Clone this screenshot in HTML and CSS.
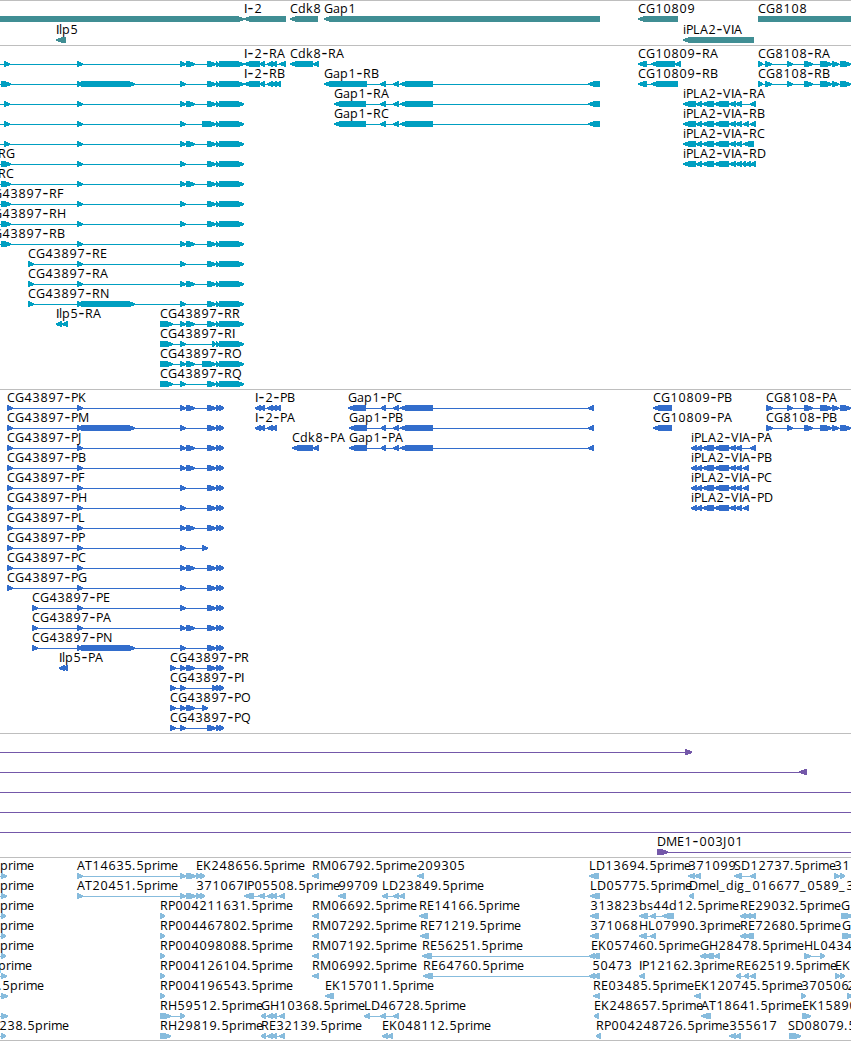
FILE: index.html
```html
<!DOCTYPE html>
<html lang="en">
<head>
<meta charset="utf-8">
<title>Genome browser</title>
<link rel="stylesheet" href="styles.css">
</head>
<body>
<main class="browser">
<section class="track genes"><svg class="canvas" id="genes"></svg></section>
<section class="track transcripts"><svg class="canvas" id="transcripts"></svg></section>
<section class="track cds"><svg class="canvas" id="cds"></svg></section>
<section class="track clones"><svg class="canvas" id="clones"></svg></section>
<section class="track ests"><svg class="canvas" id="ests"></svg></section>
</main>
<script src="tracks.js"></script>
</body>
</html>
```
FILE: styles.css
```css
body { margin: 0; background: #fff; }
.browser { display: flex; flex-direction: column; width: 851px; height: 1041px; overflow: hidden; }
.track { box-sizing: border-box; flex: none; border-top: 1px solid #bebebe; overflow: hidden; }
.canvas { display: block; width: 851px; height: 100%; overflow: hidden; }
.label { font-family: "Open Sans", sans-serif; font-size: 12.5px; fill: #000; }
.label .plain { font-family: "Liberation Sans", sans-serif; }
.label .dash { font-size: 18px; }
.shape { shape-rendering: crispEdges; fill: currentColor; }
.genes { height: 45px; color: #408e94; }
.transcripts { height: 344px; color: #009fc1; }
.cds { height: 344px; color: #326dcc; }
.clones { height: 124px; color: #7458a9; }
.ests { height: 184px; color: #87bcdd; border-bottom: 1px solid #bebebe; }
```
FILE: tracks.js
```js
const NS = "http://www.w3.org/2000/svg";

// Advance width of each label character, in pixels.
const ADVANCE = { A:8, B:7, C:8, D:9, E:7, F:6, G:9, H:9, I:3, J:4, K:8, L:7, M:11, N:9, O:9, P:7, Q:9, R:8, S:7, T:7, V:8,
  a:7, b:8, d:8, e:7, g:8, i:3, k:7, l:3, m:11, p:8, r:5, s:6, "-":7, ".":4, "_":7 };

function add(parent, name, attrs, text) {
  const el = document.createElementNS(NS, name);
  for (const k in attrs) el.setAttribute(k, attrs[k]);
  if (text) el.textContent = text;
  parent.appendChild(el);
  return el;
}

// Each character sits on its own advance; "I" is drawn without serifs and "-" wide.
function label(svg, x, y, text) {
  const line = add(svg, "text", { class: "label", y });
  let at = x;
  for (const run of text.match(/I|-|[^I-]+/g)) {
    const xs = [];
    for (const ch of run) {
      xs.push(at + (/[0-9]/.test(ch) ? 0.4 : ch === "-" ? 0.5 : 0));
      at += ADVANCE[ch] || 8;
    }
    const attrs = { x: xs.join(" "), y: run === "-" ? y + 1 : y };
    if (run === "I") attrs.class = "plain";
    if (run === "-") attrs.class = "dash";
    add(line, "tspan", attrs, run);
  }
}

// A block with a pointed end; dir is ">" or "<", "=" leaves it square.
function block(svg, a, b, top, dir) {
  const bottom = top + 6, h = Math.min(b - a - 1, 6);
  let pts;
  if (dir === ">") pts = [[a, top], [b - h, top], [b, top + 2.2], [b, top + 4], [b - h, bottom], [a, bottom]];
  else if (dir === "<") pts = [[b, top], [a + h, top], [a, top + 2.2], [a, top + 4], [a + h, bottom], [b, bottom]];
  else pts = [[a, top], [b, top], [b, bottom], [a, bottom]];
  add(svg, "polygon", { class: "shape", points: pts.map(p => p.join(",")).join(" ") });
}

// Feature: [row, label, label x, direction, "a-b a-b ...", line start, line end]
function draw(id, features, pitch = 20, top = 15) {
  const svg = document.getElementById(id);
  for (const [row, text, x, dir, spans, from, to] of features) {
    const y = top + row * pitch;
    const list = spans ? spans.split(" ").map(s => s.split("-").map(Number)) : [];
    const a = from ?? list[0][0], b = to ?? list[list.length - 1][1];
    add(svg, "rect", { class: "shape", x: a, y: y + 3, width: b - a, height: 1 });
    for (const [s, e] of list) block(svg, s, e, y, dir);
    if (text) label(svg, x, y - 3, text);
  }
}

draw("genes", [
  [0, "", 0, ">", "0-244"], [0, "I-2", 244, "<", "244-286"], [0, "Cdk8", 290, "<", "290-318"],
  [0, "Gap1", 324, "<", "324-600"], [0, "CG10809", 638, "<", "638-678"], [0, "CG8108", 758, "=", "758-851"],
  [1, "Ilp5", 56, "<", "56-66"], [1, "iPLA2-VIA", 683, "<", "683-754"]
], 21, 15);

const C = "180-186", D = "186-195", END = "207-216 216-219 219-244", LONG = "202-216 216-219 219-244", M = "77-82 81-135";
const P = "758-763 765-772 787-793 804-813 820-832 832-839 840-851";
draw("transcripts", [
  [0, "", 0, ">", `4-10 77-83 ${C} ${D} ${END}`, 0],
  [1, "", 0, ">", `1-11 ${M} ${C} ${END}`, 0],
  [2, "", 0, ">", `4-10 77-83 ${C} ${D} ${END}`, 0],
  [3, "", 0, ">", `4-10 77-83 ${C} ${LONG}`, 0],
  [4, "", 0, ">", `4-10 77-83 ${C} ${D} ${END}`, 0],
  [5, "CG43897-RG", -66, ">", `1-11 77-83 ${C} ${END}`, 0],
  [6, "CG43897-RC", -66, ">", `1-11 77-83 ${C} ${D} ${END}`, 0],
  [7, "CG43897-RF", -15, ">", `1-11 77-83 ${C} ${END}`, 0],
  [8, "CG43897-RH", -15, ">", `1-11 77-83 ${C} ${END}`, 0],
  [9, "CG43897-RB", -15, ">", `1-11 77-83 ${C} ${D} ${END}`, 0],
  [10, "CG43897-RE", 28, ">", `28-34 77-83 ${C} ${END}`],
  [11, "CG43897-RA", 28, ">", `28-34 77-83 ${C} ${D} ${END}`],
  [12, "CG43897-RN", 28, ">", `28-34 ${M} ${C} ${END}`],
  [13, "Ilp5-RA", 56, "<", "56-62 62-68"],
  [13, "CG43897-RR", 160, ">", `160-173 ${C} ${D} ${END}`],
  [14, "CG43897-RI", 160, ">", `160-173 ${C} 212-216 216-219 219-244`],
  [15, "CG43897-RO", 160, ">", `160-173 ${C} ${D} ${LONG}`],
  [16, "CG43897-RQ", 160, ">", `160-173 ${C} ${END}`],
  [0, "I-2-RA", 244, "<", "244-260 260-265 267-273 272-277 279-286"],
  [1, "I-2-RB", 244, "<", "244-260 260-265 267-273 272-277 276-281"],
  [0, "Cdk8-RA", 290, "<", "290-313 313-319"],
  [1, "Gap1-RB", 324, "<", "324-367 380-386 393-399 400-433 588-600"],
  [2, "Gap1-RA", 334, "<", "334-366 380-386 393-399 400-433 588-600"],
  [3, "Gap1-RC", 334, "<", "334-366 380-386 393-399 400-433 588-600"],
  [0, "CG10809-RA", 638, "<", "638-647 651-675 675-681"],
  [1, "CG10809-RB", 638, "<", "638-647 651-678"],
  [2, "iPLA2-VIA-RA", 683, "<", "683-696 696-702 702-714 714-729 729-736 735-742 750-756"],
  [3, "iPLA2-VIA-RB", 683, "<", "683-696 696-702 702-714 714-729 729-736 735-742 743-749 750-756"],
  [4, "iPLA2-VIA-RC", 683, "<", "683-696 696-702 702-714 714-729 729-736 735-742 743-754"],
  [5, "iPLA2-VIA-RD", 683, "<", "683-696 696-702 702-714 714-729 729-736 735-742 742-746 745-751 750-756"],
  [0, "CG8108-RA", 758, ">", P], [1, "CG8108-RB", 758, ">", P]
]);

const TAIL = "207-216 216-221 219-224";
const S = "766-773 787-793 804-813 820-832 832-839 840-851";
const V = "691-697 696-702 702-714 714-729 729-736 735-742";
const GAP = "381-386 393-399 400-433 588-594";
draw("cds", [
  ...[["K", 1], ["M", 2], ["J", 1], ["B", 1], ["F", 0], ["H", 0], ["L", 1], ["P", 3], ["C", 1], ["G", 0]].map(([n, kind], i) =>
    [i, "CG43897-P" + n, 7, ">", `7-13 ${kind === 2 ? M : "77-83"} ${C} ${kind === 1 ? D + " " : ""}${kind === 3 ? "202-208" : TAIL}`]),
  [10, "CG43897-PE", 32, ">", `32-38 77-83 ${C} ${TAIL}`],
  [11, "CG43897-PA", 32, ">", `32-38 77-83 ${C} ${D} ${TAIL}`],
  [12, "CG43897-PN", 32, ">", `32-38 ${M} ${C} ${TAIL}`],
  [13, "Ilp5-PA", 59, "<", "59-65 62-68"],
  [13, "CG43897-PR", 170, ">", `170-176 ${C} ${D} ${TAIL}`],
  [14, "CG43897-PI", 170, ">", `170-176 ${C} 212-217 216-221 219-224`],
  [15, "CG43897-PO", 170, ">", `170-176 ${C} ${D} 202-208`],
  [16, "CG43897-PQ", 170, ">", `170-176 ${C} ${TAIL}`],
  [0, "I-2-PB", 255, "<", "255-261 260-265 267-273 272-277 276-281"],
  [1, "I-2-PA", 255, "<", "255-261 260-265 267-273 272-277"],
  [2, "Cdk8-PA", 292, "<", "292-313 313-319"],
  [0, "Gap1-PC", 348, "<", "348-366 " + GAP],
  [1, "Gap1-PB", 349, "<", "349-367 " + GAP],
  [2, "Gap1-PA", 349, "<", "349-367 " + GAP],
  [0, "CG10809-PB", 653, "<", "653-672"], [1, "CG10809-PA", 653, "<", "653-672"],
  [2, "iPLA2-VIA-PA", 691, "<", V + " 750-756"],
  [3, "iPLA2-VIA-PB", 691, "<", V + " 743-749"],
  [4, "iPLA2-VIA-PC", 691, "<", V + " 743-749"],
  [5, "iPLA2-VIA-PD", 691, "<", V + " 743-749"],
  [0, "CG8108-PA", 766, ">", S], [1, "CG8108-PB", 766, ">", S]
]);

draw("clones", [
  [0, "", 0, ">", "685-692", 0, 691], [1, "", 0, "<", "799-807", 0, 807],
  [2, "", 0, ">", "", 0, 851], [3, "", 0, ">", "", 0, 851], [4, "", 0, ">", "", 0, 851],
  [5, "DME1-003J01", 657, ">", "657-668", 657, 851]
]);

draw("ests", [
  [0, "prime", 0, ">", "1-7", 0], [1, "prime", 0, ">", "1-7", 0], [2, "prime", 0, ">", "1-6", 0],
  [3, "prime", 0, ">", "1-6", 0], [4, "prime", 0, ">", "1-6", 0], [5, "prime", -2, ">", "1-7", 0],
  [6, ".5prime", -2, ">", "1-8", 0], [7, "", 0, ">", "1-8", 0], [8, "238.5prime", -1, ">", "1-6", 0],
  [0, "AT14635.5prime", 77, ">", "77-83 180-186 186-196"],
  [1, "AT20451.5prime", 77, ">", "77-83 180-186 186-196"],
  [0, "EK248656.5prime", 196, ">", "196-201 200-205"],
  [1, "371067", 196, ">", "196-201 200-205"],
  [1, "IP05508.5prime", 244, "<", "244-254 258-265 267-273 272-277 279-285"],
  [2, "RP004211631.5prime", 160, ">", "160-165"], [3, "RP004467802.5prime", 160, ">", "160-165"],
  [4, "RP004098088.5prime", 160, ">", "160-165"], [5, "RP004126104.5prime", 160, ">", "160-165"],
  [6, "RP004196543.5prime", 160, ">", "160-165"],
  [7, "RH59512.5prime", 160, ">", "160-171 180-185"], [8, "RH29819.5prime", 160, ">", "160-171"],
  [7, "GH10368.5prime", 261, "<", "261-266 267-273 272-277 279-285"],
  [8, "RE32139.5prime", 261, "<", "261-266 267-273 272-277 279-285"],
  [0, "RM06792.5prime", 312, "<", "312-319"], [2, "RM06692.5prime", 312, "<", "312-319"],
  [3, "RM07292.5prime", 312, "<", "312-319"], [4, "RM07192.5prime", 312, "<", "312-319"],
  [5, "RM06992.5prime", 312, "<", "312-319"],
  [0, "209305", 417, "<", "417-424"], [1, "99709", 338, "<", "338-346"],
  [1, "LD23849.5prime", 382, "<", "382-388 393-399 399-405"],
  [2, "RE14166.5prime", 419, "<", "419-428"], [3, "RE71219.5prime", 420, "<", "420-429"],
  [4, "RE56251.5prime", 422, "<", "422-432 589-595"], [5, "RE64760.5prime", 423, "<", "423-433 589-595"],
  [6, "EK157011.5prime", 325, "<", "325-334"], [7, "LD46728.5prime", 364, "<", "364-370 380-386 393-399"],
  [8, "EK048112.5prime", 382, "<", "382-388 387-393"],
  [0, "LD13694.5prime", 589, "<", "589-599"], [1, "LD05775.5prime", 590, "<", "590-600"],
  [2, "313823", 590, "<", "590-599"], [3, "371068", 590, "<", "590-599"],
  [4, "EK057460.5prime", 591, "<", "591-600"], [5, "50473", 592, "<", "592-600"],
  [6, "RE03485.5prime", 593, "<", "593-600"], [7, "EK248657.5prime", 594, "<", "594-599"],
  [8, "RP004248726.5prime", 596, "<", "596-601"],
  [0, "371099", 688, "<", "688-695 694-701"], [0, "SD12737.5prime", 734, "<", "734-742 750-756"],
  [0, "31", 834, ">", "834-840 840-845"],
  [1, "Dmel_dig_016677_0589_32", 689, "<", "689-694"],
  [2, "bs44d12.5prime", 639, "<", "639-648 650-656 662-674"],
  [2, "RE29032.5prime", 740, "<", "740-746 744-751 749-756"], [2, "G", 841, ">", "841-853"],
  [3, "HL07990.3prime", 639, "<", "639-647 650-656"],
  [3, "RE72680.5prime", 740, "<", "740-746 744-754"], [3, "G", 842, ">", "842-853"],
  [4, "GH28478.5prime", 700, "<", "700-706 704-714 714-720"], [4, "HL0434", 804, ">", "804-811 820-825"],
  [5, "IP12162.3prime", 639, "<", "639-645"],
  [5, "RE62519.5prime", 736, "<", "736-741 744-749 750-756"], [5, "EK", 835, ">", "835-840 840-845"],
  [6, "EK120745.5prime", 694, "<", "694-701"], [6, "370506", 801, ">", "801-806"], [6, "2", 847, ">", "847-853"],
  [7, "AT18641.5prime", 701, "<", "701-711"], [7, "EK15890", 802, ">", "802-811"],
  [8, "355617", 729, "<", "729-736 735-741"], [8, "SD08079.5", 788, ">", "789-801"]
]);
```
